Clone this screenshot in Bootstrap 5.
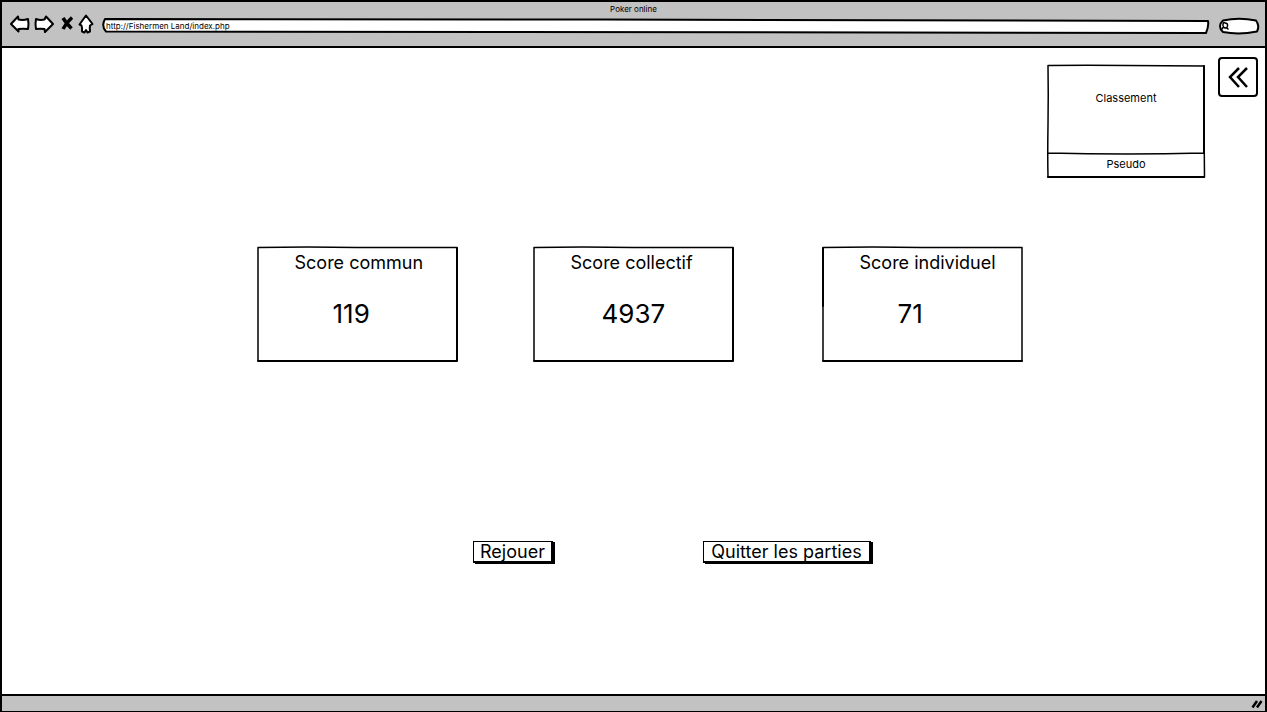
<!DOCTYPE html>
<html lang="fr">
<head>
<meta charset="utf-8">
<meta name="viewport" content="width=device-width, initial-scale=1">
<title>Poker online</title>
<link href="https://cdn.jsdelivr.net/npm/bootstrap@5.3.0/dist/css/bootstrap.min.css" rel="stylesheet">
<style>
  body { font-family: Inter, "Liberation Sans", sans-serif; color: #000; background: #fff; }
  .window { border: 2px solid #000; border-bottom-width: 1px; }
  .chrome { background: #c2c2c2; }
  .topbar { height: 46px; border-bottom: 2px solid #000; }
  .title { font-size: 8px; line-height: 14px; }
  .tools { height: 16px; padding-left: 8px; padding-right: 6px; }
  .tool { border: 0; background: none; padding: 0; line-height: 0; }
  .sketch { position: absolute; inset: 0; width: 100%; height: 100%; overflow: visible; pointer-events: none; }
  .sketch path { stroke: #000; fill: #fff; stroke-linejoin: round; stroke-linecap: round; vector-effect: non-scaling-stroke; }
  .field { position: relative; border: 0; background: none; padding: 0 4px; width: 100%; height: 14px; font-size: 8px; line-height: 14px; display: block; color: #000; }
  .address { margin-left: 8px; margin-right: 10px; }
  .search { width: 40px; height: 16px; }
  .search .field { padding-left: 12px; }
  .profile { width: 158px; font-size: 11px; line-height: 16px; margin-top: 17px; margin-right: 13px; }
  .rank { height: 89px; padding-top: 25px; }
  .pseudo { height: 24px; padding-top: 2px; }
  .fold { width: 40px; height: 40px; margin-top: 9px; margin-right: 7px; border: 2px solid #000; border-radius: 4px; background: #fff; }
  .scores { margin-top: 68px; padding-left: 12px; }
  .score { width: 201px; height: 116px; padding: 6px 0 0 38px; margin-right: 75px; }
  .score:nth-child(2) { margin-right: 88px; }
  .score:last-child { margin-right: 0; }
  .score h2 { font-size: 18px; line-height: 22px; font-weight: 400; margin: 0; }
  .value { font-size: 26px; line-height: 32px; margin-top: 24px; padding-left: 38px; }
  .value.wide { padding-left: 31px; }
  .actions { margin-top: 179px; padding-left: 77px; gap: 150px; }
  .action { border: 1px solid #000; border-right-width: 2px; border-bottom-width: 2px; box-shadow: 2px 1px 0 #000; background: #fff; color: #000; font-size: 18px; line-height: 19px; padding: 0; height: 22px; width: 80px; white-space: nowrap; }
  .action.long { width: 168px; }
  .bottombar { height: 17px; border-top: 2px solid #000; padding-right: 2px; }
</style>
</head>
<body>
<div class="window min-vh-100 d-flex flex-column">
  <header class="chrome topbar">
    <div class="title text-center">Poker online</div>
    <div class="tools d-flex align-items-center">
      <button class="tool" aria-label="Précédent"><svg width="20" height="20" viewBox="0 0 20 20"><path d="M1 10 8 2.500 8.500 5.500Q13 6.500 18 5L18.500 10 18 15Q13 14.500 8.500 15L8.500 17.500Z" fill="#fff" stroke="#000" stroke-width="2" stroke-linejoin="round"/></svg></button>
      <button class="tool ms-1" aria-label="Suivant"><svg width="20" height="20" viewBox="0 0 20 20"><path d="M19 10 12 2.500 10.500 5.500Q6 6.500 2 5L1.500 10 2 15Q6 14.500 10.500 15L11 18Z" fill="#fff" stroke="#000" stroke-width="2" stroke-linejoin="round"/></svg></button>
      <button class="tool ms-1" aria-label="Arrêter"><svg width="20" height="20" viewBox="0 0 20 20"><path d="M5 4Q8 9 13.500 14.500M14 3.500Q9 8 5 15" fill="none" stroke="#000" stroke-width="3.500"/></svg></button>
      <button class="tool" aria-label="Accueil"><svg width="16" height="20" viewBox="0 0 16 20"><path d="M8 1.500 14.500 10 12 11.500Q11.500 14 12 17.500L9.500 18.500 8 16 6.500 18.500 4 17.500Q4.500 14 3.500 11.500L1.500 10.500Z" fill="#fff" stroke="#000" stroke-width="2" stroke-linejoin="round"/></svg></button>
      <div class="address position-relative flex-grow-1 mt-1">
        <svg class="sketch" viewBox="0 0 1107 14" preserveAspectRatio="none"><path stroke-width="2" d="M3 0Q250 0 500 .5T1106 2Q1107 7 1104 14Q700 13 400 13T4 12.500Q-1 7 3 0Z"/></svg>
        <input class="field" type="text" aria-label="Adresse" value="http://Fishermen Land/index.php">
      </div>
      <div class="search position-relative mt-1">
        <svg class="sketch" viewBox="0 0 40 16"><path stroke-width="2" d="M4 2.500Q20-1 37 2.500Q41 8 38 13.500Q20 17 4 14Q-2 8 4 2.500Z"/><path stroke-width="1.500" d="M6 5Q9 5 8.500 8T5 9.500Q3.500 8 4 6T6 5M4.500 9 2.500 11.500M7.500 9.500 9 11"/></svg>
        <input class="field" type="search" aria-label="Rechercher">
      </div>
    </div>
  </header>

  <main class="flex-grow-1">
    <div class="d-flex justify-content-end align-items-start">
      <section class="profile position-relative text-center">
        <svg class="sketch" viewBox="0 0 158 113" preserveAspectRatio="none"><path stroke-width="1.500" d="M1 .5Q40 0 80 .5L157 1Q157 60 157.500 112Q80 111.500 1 112Q.5 90 1 60T1 .5ZM1 88Q80 90 157 88"/><path stroke-width="2" d="M157 1V88M1 112H157"/></svg>
        <div class="rank position-relative">Classement</div>
        <div class="pseudo position-relative">Pseudo</div>
      </section>
      <button class="fold d-flex align-items-center justify-content-center p-0" aria-label="Replier"><svg width="24" height="24" viewBox="0 0 24 24"><path d="M13 3 4 12 13 22M21 3 12 12 21 22" fill="none" stroke="#000" stroke-width="2.500"/></svg></button>
    </div>

    <div class="scores d-flex justify-content-center">
      <section class="score position-relative">
        <svg class="sketch" viewBox="0 0 201 116" preserveAspectRatio="none"><path stroke-width="1.500" d="M1 1.500Q50 .5 100 1.500L200 1.500 200 115Q100 115 1 114.500Q1 60 1 1.500Z"/><path stroke-width="2" d="M200 2V115H1"/></svg>
        <h2 class="position-relative">Score commun</h2>
        <div class="value position-relative">119</div>
      </section>
      <section class="score position-relative">
        <svg class="sketch" viewBox="0 0 201 116" preserveAspectRatio="none"><path stroke-width="1.500" d="M1 1.500Q50 .5 100 1.500L200 1.500 200 115Q100 115 1 114.500Q1 60 1 1.500Z"/><path stroke-width="2" d="M200 2V115H1"/></svg>
        <h2 class="position-relative">Score collectif</h2>
        <div class="value wide position-relative">4937</div>
      </section>
      <section class="score position-relative">
        <svg class="sketch" viewBox="0 0 201 116" preserveAspectRatio="none"><path stroke-width="1.500" d="M1 1.500Q50 .5 100 1.500L200 1.500 200 115Q100 115 1 114.500Q1 60 1 1.500Z"/><path stroke-width="2" d="M1 60V2M200 115H1"/></svg>
        <h2 class="position-relative">Score individuel</h2>
        <div class="value position-relative">71</div>
      </section>
    </div>

    <div class="actions d-flex justify-content-center">
      <button class="action">Rejouer</button>
      <button class="action long">Quitter les parties</button>
    </div>
  </main>

  <footer class="chrome bottombar d-flex justify-content-end align-items-center">
    <svg width="12" height="12" viewBox="0 0 12 12"><path d="M1.500 9.500 6 3M6 9.500 10.500 3" fill="none" stroke="#000" stroke-width="2.500"/></svg>
  </footer>
</div>
<script src="https://cdn.jsdelivr.net/npm/bootstrap@5.3.0/dist/js/bootstrap.bundle.min.js"></script>
</body>
</html>
